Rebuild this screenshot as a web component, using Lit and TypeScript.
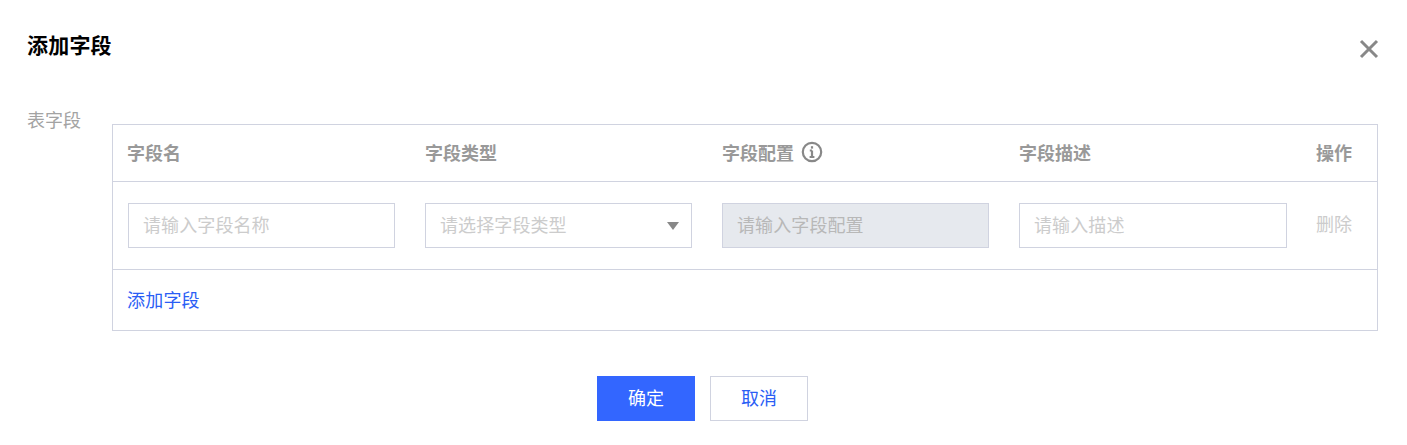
import { LitElement, html, css } from 'lit';
import { customElement } from 'lit/decorators.js';

@customElement('app-root')
export class AppRoot extends LitElement {
  static styles = css`
    :host {
      display: block;
      width: 1407px;
      height: 445px;
      background: #fff;
      font-family: "Noto Sans CJK SC", "Liberation Sans", sans-serif;
      font-size: 18px;
      color: #888;
      overflow: hidden;
    }
    .dialog { padding: 28px 29px 0 27px; box-sizing: border-box; }
    .head {
      display: flex;
      justify-content: space-between;
      align-items: flex-start;
      height: 96px;
    }
    .title { font-size: 21px; font-weight: 700; color: #000; line-height: 36px; margin-top: -2px; letter-spacing: 0.2px; }
    .close { width: 22px; height: 22px; margin: 10px -2px 0 0; display: block; }
    .field { display: flex; }
    .label { width: 85px; flex: none; line-height: 24px; margin-top: -17px; color: #a3a3a3; }
    .table { flex: 1; border: 1px solid #d0d3e0; box-sizing: border-box; }
    .grid {
      display: grid;
      grid-template-columns: 267px 267px 267px 268px 36px;
      column-gap: 30px;
      padding: 0 24px 0 15px;
      align-items: center;
    }
    .thead { height: 56px; font-weight: 700; border-bottom: 1px solid #d0d3e0; color: #999; }
    .th { display: flex; align-items: center; gap: 7px; }
    .cell { padding-bottom: 2px; }
    .cell.edge { margin-left: -1px; }
    .tbody { height: 87px; border-bottom: 1px solid #d0d3e0; }
    .input {
      height: 45px;
      border: 1px solid #d0d3e0;
      box-sizing: border-box;
      padding: 0 15px 4px 14px;
      display: flex;
      align-items: center;
      justify-content: space-between;
      color: #ccc;
      letter-spacing: 0.1px;
    }
    .input.disabled { background: #e6e9ee; color: #b8b8b8; }
    .arrow { width: 0; height: 0; border-left: 6px solid transparent; border-right: 6px solid transparent; border-top: 8px solid #888; margin: 4px -3px 0 0; }
    .del { color: #ccc; margin-left: -1px; padding-bottom: 5px; }
    .foot { height: 60px; padding: 0 0 2px 14px; box-sizing: border-box; display: flex; align-items: center; color: #2a5ef5; letter-spacing: 0.2px; }
    .actions { display: flex; justify-content: center; gap: 15px; margin-top: 45px; }
    .btn {
      width: 98px; height: 45px; box-sizing: border-box; padding-bottom: 3px;
      display: flex; align-items: center; justify-content: center;
      border: 1px solid #d0d3e0; color: #2a5ef5; background: #fff;
    }
    .btn.primary { background: #3366ff; border-color: #3366ff; color: #fff; }
  `;

  render() {
    return html`
      <div class="dialog">
        <div class="head">
          <div class="title">添加字段</div>
          <svg class="close" viewBox="0 0 22 22" fill="none" stroke="#888" stroke-width="3">
            <path d="M3 3L19 19M19 3L3 19"></path>
          </svg>
        </div>
        <div class="field">
          <div class="label">表字段</div>
          <div class="table">
            <div class="grid thead">
              <div class="cell edge">字段名</div>
              <div class="cell">字段类型</div>
              <div class="cell th">字段配置
                <svg width="22" height="22" viewBox="0 0 22 22" fill="none" stroke="#888" stroke-width="2.2">
                  <circle cx="11" cy="11" r="9.2"></circle>
                  <path d="M11 9.5V16M8.6 16H13.4M8.8 9.5H11"></path>
                  <path d="M11 5.2V7.6"></path>
                </svg>
              </div>
              <div class="cell">字段描述</div>
              <div class="cell edge">操作</div>
            </div>
            <div class="grid tbody">
              <div class="input">请输入字段名称</div>
              <div class="input">请选择字段类型<span class="arrow"></span></div>
              <div class="input disabled">请输入字段配置</div>
              <div class="input">请输入描述</div>
              <div class="del">删除</div>
            </div>
            <div class="foot">添加字段</div>
          </div>
        </div>
        <div class="actions">
          <div class="btn primary">确定</div>
          <div class="btn">取消</div>
        </div>
      </div>
    `;
  }
}
